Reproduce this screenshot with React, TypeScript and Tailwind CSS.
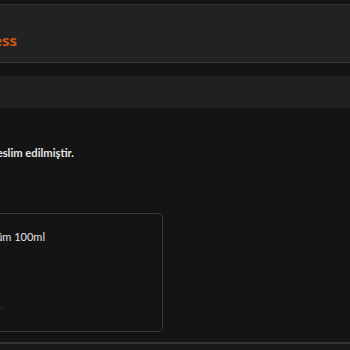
export default function App() {
    return (
        <div className="w-[350px] h-[350px] overflow-hidden bg-[#141414] font-['Open_Sans',sans-serif] text-[#e8e8e8]">
            <div className="h-[4px]" />

            {/* cargo header */}
            <div className="h-[59px] border-y border-[#353535] bg-[#222222] pt-[25px]">
                <div className="w-[17px] flex justify-end">
                    <span className="whitespace-nowrap text-[15px] leading-[20px] font-bold text-[#c9560f]">Trendyol Express</span>
                </div>
            </div>

            <div className="h-[13px]" />
            <div className="h-[32px] bg-[#202020]" />

            {/* status */}
            <div className="pt-[37px] w-[74px] flex justify-end">
                <span className="whitespace-nowrap font-['Lato',sans-serif] text-[11.2px] leading-[16px] font-bold text-[#e6e6e6]">Siparişiniz teslim edilmiştir.</span>
            </div>

            {/* product card */}
            <div className="mt-[52px] -ml-[20px] w-[183px] h-[119px] border border-[#383838] rounded-[4px] pt-[15px] pl-[20px]">
                <div className="w-[44px] flex justify-end">
                    <span className="whitespace-nowrap font-['Lato',sans-serif] text-[11px] leading-[16px] text-[#e2e2e2]">Erkek Parfüm 100ml</span>
                </div>
                <div className="mt-[52px] w-[2px] flex justify-end">
                    <span className="whitespace-nowrap text-[12px] leading-[16px] font-bold text-[#4a1810]">249,99 TL</span>
                </div>
            </div>

            <div className="mt-[10px] h-[2px] bg-[#333333]" />
            <div className="h-[8px] bg-[#181818]" />
        </div>
    );
}
